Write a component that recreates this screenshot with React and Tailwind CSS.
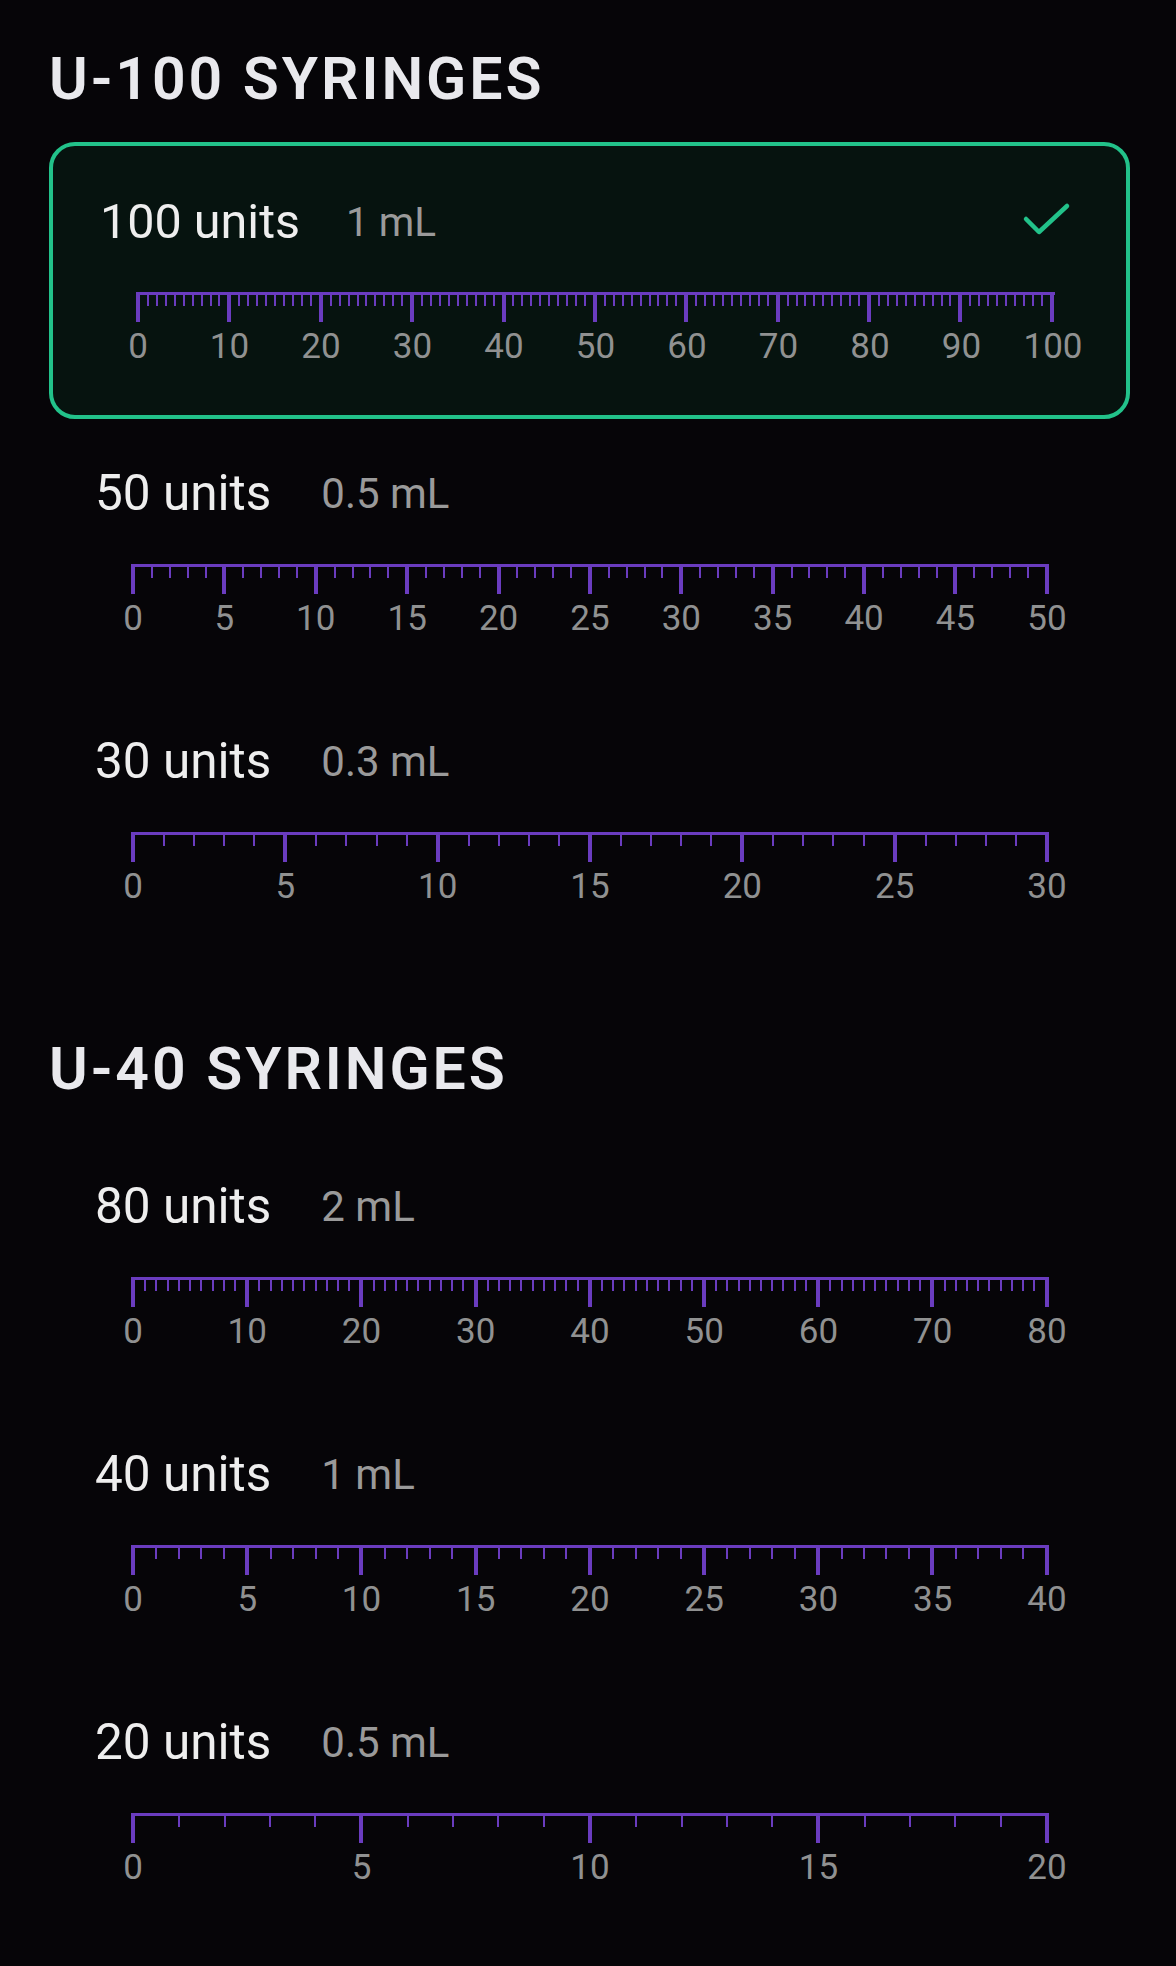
import React from "react";

const sections = [
  {
    title: "U-100 SYRINGES",
    items: [
      { units: 100, ml: "1 mL", major: 10, selected: true },
      { units: 50, ml: "0.5 mL", major: 5 },
      { units: 30, ml: "0.3 mL", major: 5 },
    ],
  },
  {
    title: "U-40 SYRINGES",
    items: [
      { units: 80, ml: "2 mL", major: 10 },
      { units: 40, ml: "1 mL", major: 5 },
      { units: 20, ml: "0.5 mL", major: 5 },
    ],
  },
];

function Ruler({ units, major }) {
  const ticks = Array.from({ length: units + 1 }, (_, i) => i);
  const labels = ticks.filter((i) => i % major === 0);

  return (
    <div className="ml-[36px] mr-[35px]">
      {/* ticks */}
      <div className="flex justify-between items-start h-[30px] border-t-[3px] border-[#6a3cbf]">
        {ticks.map((i) =>
          i % major === 0 ? (
            <div key={i} className="w-[4px] h-[27px] bg-[#6a3cbf]" />
          ) : (
            <div key={i} className="w-[2px] h-[11px] bg-[#6a3cbf]" />
          )
        )}
      </div>

      {/* numbers */}
      <div className="flex justify-between mt-[7px] h-[35px]">
        {labels.map((n) => (
          <div key={n} className="w-[4px] flex justify-center">
            <span className="whitespace-nowrap text-[35px] leading-none text-[#909191]">
              {n}
            </span>
          </div>
        ))}
      </div>
    </div>
  );
}

function SyringeRow({ units, ml, major, selected }) {
  return (
    <div
      className={
        selected
          ? "border-[4px] border-[#22c28a] bg-[#06130f] rounded-[26px] pl-[47px] pr-[36px] pt-[52px] pb-[51px]"
          : "px-[46px] py-[51px]"
      }
    >
      {/* header */}
      <div className="flex items-center h-[48px]">
        <span
          className={
            selected
              ? "text-[48.5px] leading-none text-[#eeeeee]"
              : "text-[49.5px] leading-none text-[#eeeeee]"
          }
        >
          {units} units
        </span>
        <span
          className={
            selected
              ? "ml-[46px] text-[40.5px] leading-none text-[#9a9a9a]"
              : "ml-[50px] text-[42px] leading-none text-[#9a9a9a]"
          }
        >
          {ml}
        </span>
        {selected && (
          <svg
            className="ml-auto mr-[19px]"
            width="50"
            height="40"
            viewBox="0 0 50 40"
            fill="none"
          >
            <polyline
              points="5,17 18,30 46,4"
              stroke="#22c28a"
              strokeWidth="4.5"
              strokeLinecap="round"
              strokeLinejoin="round"
            />
          </svg>
        )}
      </div>

      <div className="mt-[46px]">
        <Ruler units={units} major={major} />
      </div>
    </div>
  );
}

export default function App() {
  return (
    <div className="min-h-screen bg-[#060508] font-[Roboto,'Noto_Sans',sans-serif] pl-[49px] pr-[46px] pt-[49px]">
      {sections.map((section, idx) => (
        <section key={section.title} className={idx > 0 ? "mt-[84px]" : ""}>
          <h2 className="text-[59px] leading-none font-semibold tracking-[0.05em] text-[#e9e9ed] mb-[34px]">
            {section.title}
          </h2>

          <div className="flex flex-col">
            {section.items.map((item) => (
              <SyringeRow key={item.units} {...item} />
            ))}
          </div>
        </section>
      ))}
    </div>
  );
}
